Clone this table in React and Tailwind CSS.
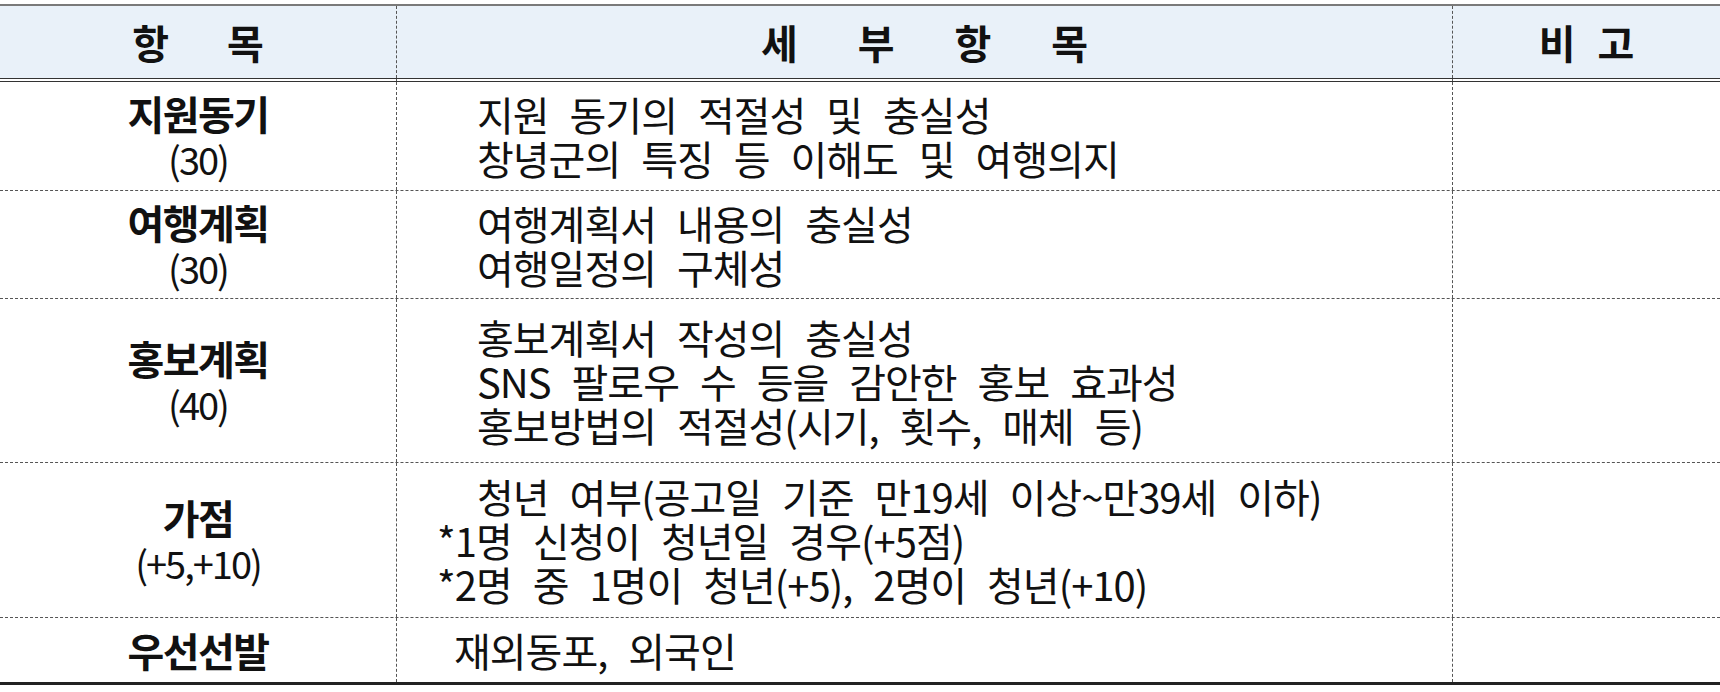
import React from "react";

const rows = [
  {
    title: "지원동기",
    sub: "(30)",
    h: "h-[109px]",
    lines: [
      { t: "지원 동기의 적절성 및 충실성", pl: "pl-[80px]" },
      { t: "창녕군의 특징 등 이해도 및 여행의지", pl: "pl-[80px]" },
    ],
  },
  {
    title: "여행계획",
    sub: "(30)",
    h: "h-[108px]",
    lines: [
      { t: "여행계획서 내용의 충실성", pl: "pl-[80px]" },
      { t: "여행일정의 구체성", pl: "pl-[80px]" },
    ],
  },
  {
    title: "홍보계획",
    sub: "(40)",
    h: "h-[164px]",
    lines: [
      { t: "홍보계획서 작성의 충실성", pl: "pl-[80px]" },
      { t: "SNS 팔로우 수 등을 감안한 홍보 효과성", pl: "pl-[80px]" },
      { t: "홍보방법의 적절성(시기, 횟수, 매체 등)", pl: "pl-[80px]" },
    ],
  },
  {
    title: "가점",
    sub: "(+5,+10)",
    h: "h-[155px]",
    lines: [
      { t: "청년 여부(공고일 기준 만19세 이상~만39세 이하)", pl: "pl-[80px]" },
      { t: "*1명 신청이 청년일 경우(+5점)", pl: "pl-[40px]" },
      { t: "*2명 중 1명이 청년(+5), 2명이 청년(+10)", pl: "pl-[40px]" },
    ],
  },
  {
    title: "우선선발",
    sub: null,
    h: "h-[67px]",
    lines: [{ t: "재외동포, 외국인", pl: "pl-[57px]" }],
  },
];

const font = "font-['Noto_Sans_CJK_KR','Noto_Sans',sans-serif]";

export default function App() {
  return (
    <div className={`w-[1720px] h-[692px] bg-white pt-[4px] text-[#111] ${font}`}>
      <div className="border-t-2 border-[#7a7a7a]">
        {/* header */}
        <div className="grid grid-cols-[397px_1056px_1fr] h-[73px] bg-[#e9f1f9] border-b border-[#333]">
          <div className="border-r border-dashed border-[#555] flex items-center justify-center gap-[58px] text-[40px] font-bold leading-none">
            <span>항</span>
            <span>목</span>
          </div>
          <div className="border-r border-dashed border-[#555] flex items-center justify-center gap-[60px] text-[40px] font-bold leading-none">
            <span>세</span>
            <span>부</span>
            <span>항</span>
            <span>목</span>
          </div>
          <div className="flex items-center justify-center gap-[22px] text-[40px] font-bold leading-none">
            <span>비</span>
            <span>고</span>
          </div>
        </div>
        <div className="grid grid-cols-[397px_1056px_1fr] h-[3px] border-b border-[#333]">
          <div className="border-r border-dashed border-[#555]" />
          <div className="border-r border-dashed border-[#555]" />
          <div />
        </div>
        {rows.map((r, i) => (
          <div
            key={i}
            className={`grid grid-cols-[397px_1056px_1fr] ${r.h} ${
              i === rows.length - 1 ? "border-b-[3px] border-solid border-[#222]" : "border-b border-dashed border-[#555]"
            }`}
          >
            <div className="border-r border-dashed border-[#555] flex flex-col items-center justify-center leading-[45px]">
              <span className="text-[40px] font-bold tracking-[-1.5px]">{r.title}</span>
              {r.sub && <span className="text-[38px] tracking-[-2px]">{r.sub}</span>}
            </div>
            <div className="border-r border-dashed border-[#555] flex flex-col justify-center leading-[44px] text-[40px] tracking-[-1px] [word-spacing:13px]">
              {r.lines.map((l, j) => (
                <div key={j} className={`${l.pl} whitespace-pre`}>
                  {l.t}
                </div>
              ))}
            </div>
            <div />
          </div>
        ))}
      </div>
    </div>
  );
}
